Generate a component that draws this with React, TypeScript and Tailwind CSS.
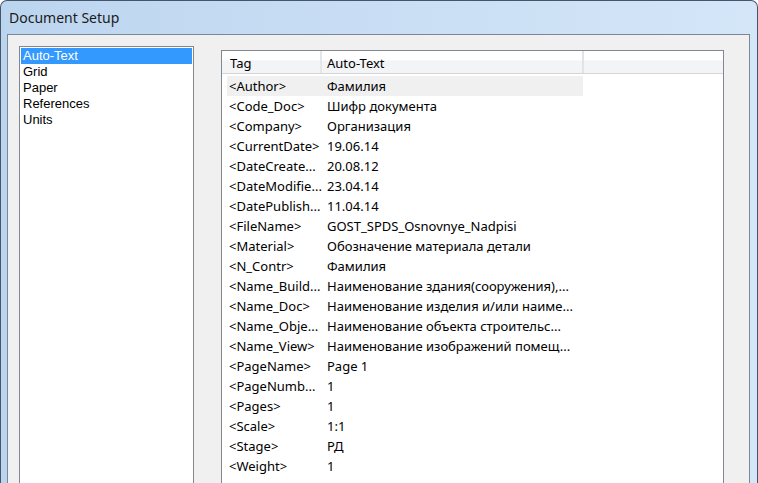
import React from 'react';

const sections = ['Auto-Text', 'Grid', 'Paper', 'References', 'Units'];

const rows: [string, string][] = [
  ['<Author>', 'Фамилия'],
  ['<Code_Doc>', 'Шифр документа'],
  ['<Company>', 'Организация'],
  ['<CurrentDate>', '19.06.14'],
  ['<DateCreate...', '20.08.12'],
  ['<DateModifie...', '23.04.14'],
  ['<DatePublish...', '11.04.14'],
  ['<FileName>', 'GOST_SPDS_Osnovnye_Nadpisi'],
  ['<Material>', 'Обозначение материала детали'],
  ['<N_Contr>', 'Фамилия'],
  ['<Name_Build...', 'Наименование здания(сооружения),...'],
  ['<Name_Doc>', 'Наименование изделия и/или наиме...'],
  ['<Name_Obje...', 'Наименование объекта строительс...'],
  ['<Name_View>', 'Наименование изображений помещ...'],
  ['<PageName>', 'Page 1'],
  ['<PageNumb...', '1'],
  ['<Pages>', '1'],
  ['<Scale>', '1:1'],
  ['<Stage>', 'РД'],
  ['<Weight>', '1'],
];

export default function App() {
  return (
    <div className="w-[758px] h-[483px] overflow-hidden bg-white font-['Noto_Sans','Liberation_Sans',sans-serif]">
      <div className="flex h-[483px] flex-col rounded-t-[7px] border border-b-0 border-[#44566b] bg-gradient-to-r from-[#bcd5ef] via-[#c9def4] to-[#d4e6f8]">
        {/* title bar */}
        <div className="flex h-[33px] items-center pl-[8px] text-[14px] text-[#1b1b1b]">Document Setup</div>

        {/* dialog body */}
        <div className="ml-[6px] mr-[7px] flex flex-1 gap-[27px] border border-b-0 border-[#7b8796] bg-[#f0f0f0] pl-[11px]">
          {/* section list */}
          <div className="mt-[11px] w-[175px] border border-b-0 border-[#828790] bg-white p-[1px] font-['Liberation_Sans',sans-serif] text-[13px] leading-[16px] text-black">
            {sections.map((s, i) => (
              <div
                key={s}
                className={i === 0 ? 'h-[16px] bg-[#3399ff] pl-[2px] text-white' : 'h-[16px] pl-[2px]'}
              >
                {s}
              </div>
            ))}
          </div>

          {/* auto-text table */}
          <div className="mt-[15px] w-[503px] border border-b-0 border-[#828790] bg-white text-[13px] leading-[18px] text-black">
            <div className="flex h-[23px] border-b border-[#d5d5d5] bg-gradient-to-b from-white from-40% to-[#f3f4f6] to-45%">
              <div className="flex w-[98px] items-center pl-[8px] pt-[2px]">Tag</div>
              <div className="w-[2px] bg-[#e6e6e6]" />
              <div className="flex w-[260px] items-center pl-[5px] pt-[2px]">Auto-Text</div>
              <div className="w-[2px] bg-[#e3e3e3]" />
              <div className="flex-1" />
            </div>
            <div className="mt-[2px] flex flex-col pl-[5px]">
              {rows.map(([tag, value], i) => (
                <div
                  key={tag}
                  className={
                    i === 0
                      ? 'flex h-[20px] w-[356px] items-center whitespace-nowrap bg-[#f0f0f0]'
                      : 'flex h-[20px] w-[356px] items-center whitespace-nowrap'
                  }
                >
                  <div className="w-[98px] overflow-hidden pl-[2px]">{tag}</div>
                  <div className="min-w-0 flex-1 overflow-hidden pl-[2px]">{value}</div>
                </div>
              ))}
            </div>
          </div>
        </div>
      </div>
    </div>
  );
}
